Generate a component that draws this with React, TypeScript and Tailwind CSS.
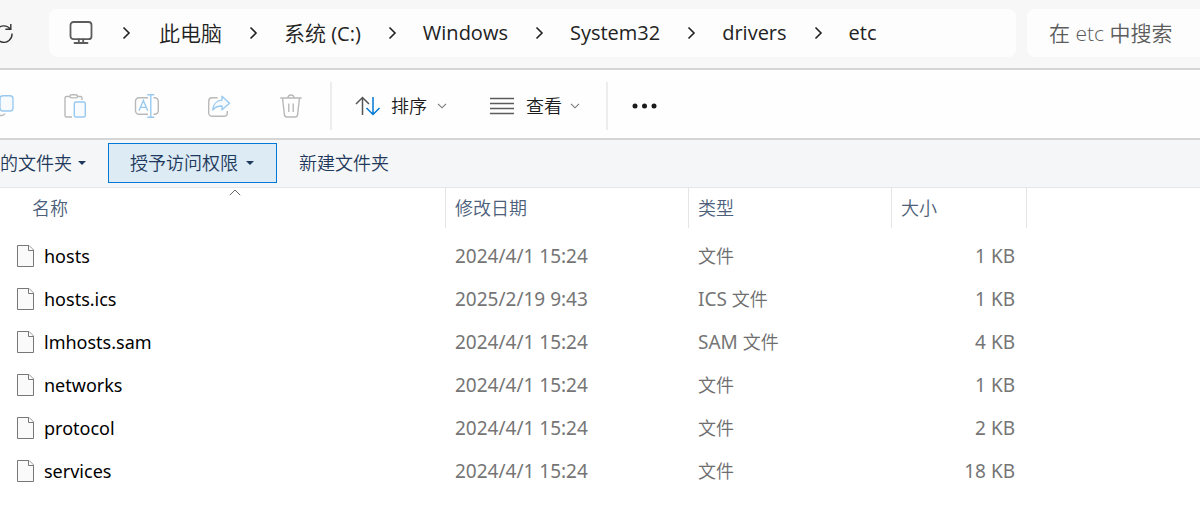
import React, { useState } from 'react';

const LATIN_FONT = "font-['Open_Sans','Noto_Sans_CJK_SC',sans-serif]";
const LIST_FONT = "font-['Noto_Sans','Noto_Sans_CJK_SC',sans-serif]";

type FileItem = {
  name: string;
  modified: string;
  prefix?: string;
  size: string;
};

const files: FileItem[] = [
  { name: 'hosts', modified: '2024/4/1 15:24', size: '1 KB' },
  { name: 'hosts.ics', modified: '2025/2/19 9:43', prefix: 'ICS', size: '1 KB' },
  { name: 'lmhosts.sam', modified: '2024/4/1 15:24', prefix: 'SAM', size: '4 KB' },
  { name: 'networks', modified: '2024/4/1 15:24', size: '1 KB' },
  { name: 'protocol', modified: '2024/4/1 15:24', size: '2 KB' },
  { name: 'services', modified: '2024/4/1 15:24', size: '18 KB' },
];

// zh is the Chinese part of a folder name, drawn lighter and a bit larger
const crumbs = [
  { zh: '此电脑', text: '' },
  { zh: '系统', text: ' (C:)' },
  { text: 'Windows' },
  { text: 'System32' },
  { text: 'drivers' },
  { text: 'etc' },
];

const RefreshIcon = () => (
  <svg width="20" height="20" viewBox="0 0 20 20" fill="none" stroke="#333" strokeWidth="1.4">
    <path d="M16.4 6.200A8.200 8.200 0 1 0 18 10.500M16.800 1v5.200h-5.400" />
  </svg>
);

const MonitorIcon = () => (
  <svg width="24" height="24" viewBox="0 0 24 24" fill="none" stroke="#5c5c5c" strokeWidth="1.8">
    <rect x="1.500" y="1" width="21" height="17.200" rx="3" />
    <path d="M9.800 18.200v3.800M14.200 18.200v3.800M5.500 22h13" strokeLinecap="round" />
  </svg>
);

const Separator = () => (
  <svg width="9" height="14" viewBox="0 0 9 14" fill="none" stroke="#222" strokeWidth="1.6" className="shrink-0">
    <path d="M1.500 1.500L7 7l-5.500 5.500" />
  </svg>
);

const CopyIcon = () => (
  <svg width="24" height="26" viewBox="0 0 24 26" fill="none" strokeWidth="1.4">
    <rect x="9" y="2.700" width="13" height="15.300" rx="3" stroke="#99c9ef" fill="#f8fbfe" />
    <path d="M6 5.500a4 4 0 0 0-3 4v9a4 4 0 0 0 4 4h3.500a4 4 0 0 0 3.500-2" stroke="#b9b9b9" />
  </svg>
);

const PasteIcon = () => (
  <svg width="24" height="26" viewBox="0 0 24 26" fill="none" strokeWidth="1.4">
    <path d="M7 3.500H3.500A1.500 1.500 0 0 0 2 5v17.500A1.500 1.500 0 0 0 3.500 24H9M14.500 3.500h3A1.500 1.500 0 0 1 19 5v2" stroke="#b9b9b9" />
    <rect x="7" y="1.700" width="7.500" height="3.200" rx="1.600" stroke="#b9b9b9" />
    <rect x="11.300" y="9" width="11" height="15" rx="1.500" stroke="#99c9ef" fill="#f8fbfe" />
  </svg>
);

const RenameIcon = () => (
  <svg width="26" height="26" viewBox="0 0 26 26" fill="none" strokeWidth="1.4">
    <path d="M14 4.700H5A3.500 3.500 0 0 0 1.500 8.200v9.600A3.500 3.500 0 0 0 5 21.300h9M19.500 4.700h1.300a3.500 3.500 0 0 1 3.500 3.500v9.600a3.500 3.500 0 0 1-3.500 3.500h-1.300" stroke="#b9b9b9" />
    <path d="M5 17.800L9.400 7.500l4.300 10.300M6.500 14.400h5.800M13.300 1.700h7M13.300 24.300h7M16.800 1.700v22.600" stroke="#99c9ef" />
  </svg>
);

const ShareIcon = () => (
  <svg width="24" height="26" viewBox="0 0 24 26" fill="none" strokeWidth="1.4" strokeLinejoin="round">
    <path d="M10.500 4.700H5A3.500 3.500 0 0 0 1.700 8v12A3.300 3.300 0 0 0 5 23.300h12a3.300 3.300 0 0 0 3.300-3.300v-2" stroke="#b9b9b9" />
    <path d="M15 3.300l7.500 6.900-7.500 6.600v-3.800c-4 0-7 1-9.200 4 .2-5.500 3.700-9.500 9.200-9.900z" stroke="#99c9ef" fill="#f8fbfe" />
  </svg>
);

const TrashIcon = () => (
  <svg width="24" height="26" viewBox="0 0 24 26" fill="none" stroke="#b9b9b9" strokeWidth="1.4">
    <path d="M1.300 5h21.400M9 5a3 3 0 0 1 6 0M3.500 5l1.900 16.600A2.600 2.600 0 0 0 8 24h8a2.600 2.600 0 0 0 2.600-2.400L20.500 5M9.800 10.500v8.500M14.200 10.500v8.500" />
  </svg>
);

const SortIcon = () => (
  <svg width="26" height="20" viewBox="0 0 26 20" fill="none" strokeWidth="1.5">
    <path d="M7.500 19V1.500M1 8l6.500-6.500L14 8" stroke="#555" />
    <path d="M18 1v17.500M11.500 12l6.500 6.500 6.500-6.500" stroke="#0078d4" />
  </svg>
);

const ListIcon = () => (
  <svg width="24" height="18" viewBox="0 0 24 18" stroke="#5c5c5c" strokeWidth="1.4">
    <path d="M0 1.500h24M0 6.500h24M0 11.500h24M0 16.500h24" />
  </svg>
);

const DownChevron = () => (
  <svg width="10" height="6" viewBox="0 0 10 6" fill="none" stroke="#777" strokeWidth="1.1">
    <path d="M1 .8l4 4 4-4" />
  </svg>
);

const DownTriangle = () => (
  <svg width="8" height="4" viewBox="0 0 8 4" fill="#1e395b">
    <path d="M0 0h8L4 4z" />
  </svg>
);

const FileIcon = () => (
  <svg width="18" height="24" viewBox="0 0 18 24" fill="#fafafa" stroke="#777" strokeWidth="1">
    <path d="M.5 1.500h11.500l4.500 4.500v16.500H.5z" />
    <path d="M11.500 1.500v5h5" fill="#fff" />
  </svg>
);

const tools = [
  { label: '复制', icon: <CopyIcon /> },
  { label: '粘贴', icon: <PasteIcon /> },
  { label: '重命名', icon: <RenameIcon /> },
  { label: '共享', icon: <ShareIcon /> },
  { label: '删除', icon: <TrashIcon /> },
];

const AddressBar: React.FC = () => {
  const [search, setSearch] = useState('');

  return (
    <div className="flex h-[70px] items-center border-b-2 border-[#d5d5d5] bg-[#f7f7f7] pb-0.5">
      <button aria-label="刷新" className="-ml-1.5 mr-[35px] shrink-0">
        <RefreshIcon />
      </button>
      <nav aria-label="地址" className="mr-[11px] flex h-12 min-w-0 flex-1 items-center rounded-lg bg-[#fdfdfd] pl-5 text-[#222]">
        <MonitorIcon />
        {crumbs.map((crumb, i) => (
          <React.Fragment key={i}>
            <span className={`flex shrink-0 ${i === 0 ? 'pl-[29px] pr-7' : 'pl-[27px] pr-[26px]'}`}>
              <Separator />
            </span>
            <a href="#" className="shrink-0 text-xl leading-7 whitespace-nowrap">
              {crumb.zh && <span className="text-[21px] leading-7 font-[350]">{crumb.zh}</span>}
              {crumb.text}
            </a>
          </React.Fragment>
        ))}
      </nav>
      <input
        type="text"
        aria-label="搜索"
        placeholder="在 etc 中搜索"
        value={search}
        onChange={(e) => setSearch(e.target.value)}
        className="h-12 w-[173px] shrink-0 rounded-l-lg bg-[#fdfdfd] pl-[22px] text-[21px] font-[350] text-[#222] outline-none placeholder:text-[#5c5c5c]"
      />
    </div>
  );
};

const Toolbar: React.FC = () => (
  <div className="flex h-[70px] items-center border-b-2 border-[#d5d5d5] bg-[#fefefe] pt-1 text-lg font-[350] text-[#1b1b1b]">
    <div className="-ml-[9px] flex items-center gap-12">
      {tools.map((tool) => (
        <button key={tool.label} aria-label={tool.label} disabled className="flex w-6 justify-center">
          <span className="shrink-0">{tool.icon}</span>
        </button>
      ))}
    </div>
    <div className="ml-[27px] h-12 w-0.5 bg-[#ededed]" />
    <button className="ml-[23px] flex items-center gap-2.5">
      <SortIcon />
      <span>排序</span>
      <DownChevron />
    </button>
    <button className="ml-[43px] flex items-center gap-3">
      <ListIcon />
      <span>查看</span>
      <span className="-ml-1"><DownChevron /></span>
    </button>
    <div className="ml-[26px] h-12 w-0.5 bg-[#ededed]" />
    <button aria-label="查看更多" className="ml-6">
      <svg width="26" height="6" viewBox="0 0 26 6" fill="#1b1b1b">
        <circle cx="3" cy="3" r="2.500" />
        <circle cx="12.500" cy="3" r="2.500" />
        <circle cx="22" cy="3" r="2.500" />
      </svg>
    </button>
  </div>
);

const CommandBar: React.FC = () => (
  <div className="flex h-12 items-center border-b border-[#e5e7ea] bg-[#f5f6f7] pb-px text-lg font-[350] text-[#1e395b]">
    <button className="flex items-center gap-1.5">
      的文件夹
      <DownTriangle />
    </button>
    <button className="ml-[22px] flex h-10 items-center gap-2 border border-[#0078d7] bg-[#dcebf4] pr-[22px] pl-[21px]">
      授予访问权限
      <DownTriangle />
    </button>
    <button className="ml-[22px]">新建文件夹</button>
  </div>
);

const FileTable: React.FC = () => (
  <table className={`w-full table-fixed border-collapse text-left ${LIST_FONT}`}>
    <colgroup>
      <col className="w-[446px]" />
      <col className="w-[243px]" />
      <col className="w-[203px]" />
      <col className="w-[135px]" />
      <col />
    </colgroup>
    <thead>
      <tr className="h-10 text-lg text-[#4c607a] *:p-0 *:font-[350]">
        <th aria-sort="ascending">
          <div className="relative ml-6 flex h-10 items-center border-r border-[#e5e5e5] pl-2">
            <button>名称</button>
            <svg width="12" height="7" viewBox="0 0 12 7" fill="none" stroke="#666" className="absolute top-px left-1/2 -translate-x-1/2">
              <path d="M.8 6.200L6 1l5.200 5.200" />
            </svg>
          </div>
        </th>
        {['修改日期', '类型', '大小'].map((title) => (
          <th key={title}>
            <div className="flex h-10 items-center border-r border-[#e5e5e5] pl-[9px]">
              <button>{title}</button>
            </div>
          </th>
        ))}
        <td />
      </tr>
    </thead>
    <tbody className="before:block before:h-1.5 before:content-['']">
      {files.map((file) => (
        <tr key={file.name} className="h-[43px] text-[19px] leading-7 text-[#757575] *:p-0">
          <td>
            <div className="flex items-center gap-[9px] pl-[17px] text-lg leading-7 text-black">
              <FileIcon />
              <span>{file.name}</span>
            </div>
          </td>
          <td><div className="pl-[9px]">{file.modified}</div></td>
          <td>
            <div className="pl-[9px]">
              {file.prefix && `${file.prefix} `}
              <span className="text-lg leading-7 font-[350] text-[#6d6d6d]">文件</span>
            </div>
          </td>
          <td className="text-right"><div className="pr-3">{file.size}</div></td>
          <td />
        </tr>
      ))}
    </tbody>
  </table>
);

const App: React.FC = () => {
  return (
    <div lang="zh-CN" className={`min-h-screen overflow-hidden bg-white ${LATIN_FONT}`}>
      <AddressBar />
      <Toolbar />
      <CommandBar />
      <FileTable />
    </div>
  );
};

export default App;
